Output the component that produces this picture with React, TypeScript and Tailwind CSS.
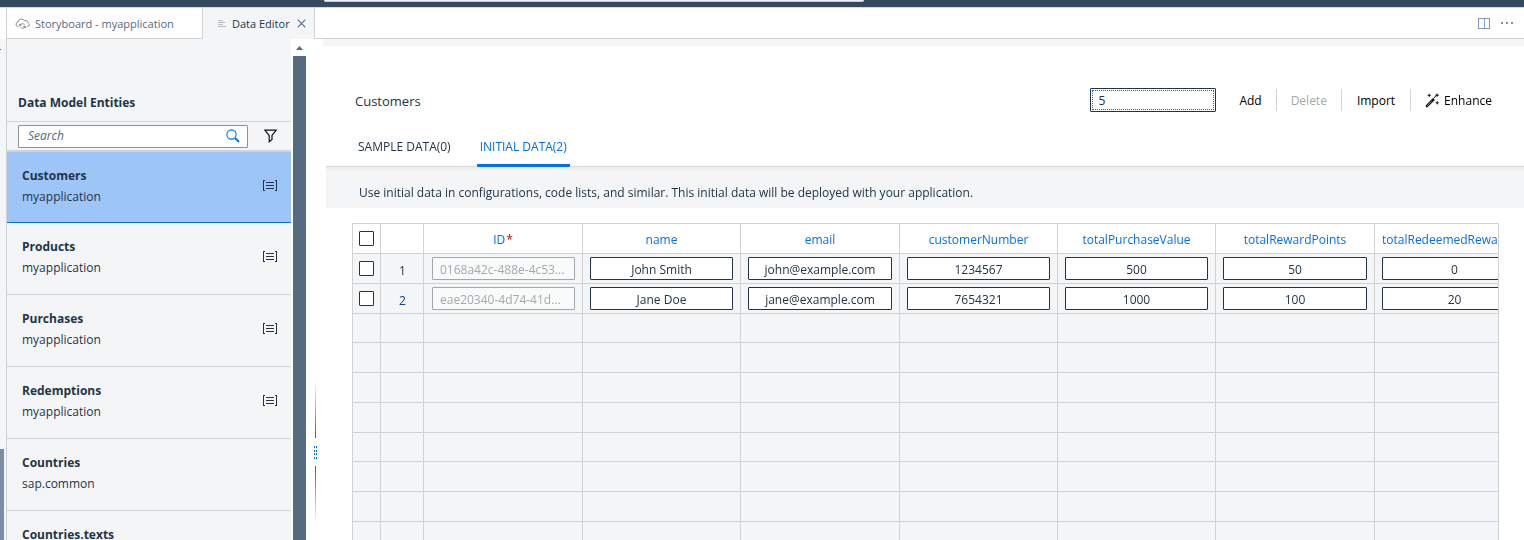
import type { ReactNode } from "react";

type Entity = { name: string; namespace: string; tagged: boolean };

const entities: Entity[] = [
  { name: "Customers", namespace: "myapplication", tagged: true },
  { name: "Products", namespace: "myapplication", tagged: true },
  { name: "Purchases", namespace: "myapplication", tagged: true },
  { name: "Redemptions", namespace: "myapplication", tagged: true },
  { name: "Countries", namespace: "sap.common", tagged: false },
  { name: "Countries.texts", namespace: "sap.common", tagged: false },
];

const columns = [
  "name",
  "email",
  "customerNumber",
  "totalPurchaseValue",
  "totalRewardPoints",
  "totalRedeemedRewardPoints",
];

const rows = [
  { id: "0168a42c-488e-4c53...", values: ["John Smith", "john@example.com", "1234567", "500", "50", "0"] },
  { id: "eae20340-4d74-41d...", values: ["Jane Doe", "jane@example.com", "7654321", "1000", "100", "20"] },
];

const emptyRows = [0, 1, 2, 3, 4, 5, 6, 7];

function CloudIcon() {
  return (
    <svg width="15" height="12" viewBox="0 0 15 12" fill="none" stroke="#8c8f94" strokeWidth="1">
      <path d="M3.500 8.500H3A2.300 2.300 0 0 1 2.800 4 3.700 3.700 0 0 1 9.500 2.700 2.900 2.900 0 0 1 13.400 5.300 1.700 1.700 0 0 1 12.800 8.500H12" />
      <path d="M5 7.200a2.800 2.800 0 0 1 4.800-.2M10.300 8.500a2.800 2.800 0 0 1-4.800.8" />
      <path d="M4.500 5.800v1.700h1.700M8.200 8.500h2.300v1.800" />
    </svg>
  );
}

function LinesIcon() {
  return (
    <svg width="9" height="10" viewBox="0 0 9 10" fill="#b9bbbe">
      <path d="M1 1h5v1H1zM1 3h7v1H1zM1 5h5v1H1zM1 7h8v1H1z" />
    </svg>
  );
}

function EntityIcon() {
  return (
    <svg width="16" height="12" viewBox="0 0 16 12" fill="none" stroke="#223548" strokeWidth="1" shapeRendering="crispEdges">
      <path d="M3 .5H1.500v10H3M13 .5h1.500v10H13M4 2.500h8M4 5.500h8M4 8.500h8" />
    </svg>
  );
}

function SearchIcon() {
  return (
    <svg width="14" height="14" viewBox="0 0 14 14" fill="none" stroke="#0070f2">
      <circle cx="5.500" cy="5.500" r="4.600" strokeWidth="1.100" />
      <path d="M9 9l4 4" strokeWidth="2" />
    </svg>
  );
}

function FilterIcon() {
  return (
    <svg width="13" height="14" viewBox="0 0 13 14" fill="none" stroke="#111" strokeWidth="1.200">
      <path d="M.8 1.100h11.400L8 6.500v4L5.200 12.800V6.500z" />
    </svg>
  );
}

function WandIcon() {
  return (
    <svg width="15" height="15" viewBox="0 0 15 15" fill="#111">
      <path d="M.8 12.200L8 5l1.900 1.900-7.200 7.200q-.9.700-1.600 0t-.3-1.900z" />
      <path d="M2 12.900l4.700-4.700" stroke="#aaa" strokeWidth=".8" />
      <path d="M12 0l.7 1.600 1.700.6-1.700.6L12 4.400l-.7-1.600-1.700-.6 1.700-.6zM4.200.2l.6 1.500 1.500.6-1.500.6-.6 1.500-.6-1.500-1.500-.6 1.500-.6zM12.200 7.700l.6 1.500 1.500.6-1.500.6-.6 1.500-.6-1.500-1.500-.6 1.500-.6z" />
      <path d="M8.500 5.500L10.800 3" stroke="#111" strokeWidth="1" />
    </svg>
  );
}

function Checkbox({ label }: { label: string }) {
  return (
    <input
      type="checkbox"
      aria-label={label}
      className="mx-auto block size-[15px] appearance-none rounded-[1px] border border-[#223548] bg-white checked:bg-[#0070f2]"
    />
  );
}

function Cell({ children, className = "" }: { children?: ReactNode; className?: string }) {
  return <td className={`border-r border-b border-[#d0d2d3] p-0 ${className}`}>{children}</td>;
}

function Sidebar() {
  return (
    <aside className="flex w-[299px] shrink-0">
      <div className="min-w-0 flex-1 overflow-hidden bg-[#f4f5f7]">
        <h2 className="flex h-[82px] items-end px-[11px] pb-[7px] leading-[22px] font-bold">Data Model Entities</h2>
        <div className="flex h-[30px] items-center border-y border-[#d0d2d3] pr-[14px] pl-[11px]">
          <label className="flex h-[23px] flex-1 items-center rounded-[1px] border border-[#89919a] bg-white pr-[7px] pl-[9px]">
            <input
              type="search"
              aria-label="Search entities"
              placeholder="Search"
              className="min-w-0 flex-1 outline-none placeholder:text-[#556b81] placeholder:italic"
            />
            <SearchIcon />
          </label>
          <button type="button" aria-label="Filter" className="ml-4">
            <FilterIcon />
          </button>
        </div>
        <ul>
          {entities.map((entity, index) => (
            <li key={entity.name}>
              <button
                type="button"
                className={
                  index === 0
                    ? "flex h-[72px] w-full items-center justify-between border-t border-b border-t-[#d0d2d3] border-b-[#0070f2] bg-[#9dc5f8] pr-[13px] pb-[3px] pl-[15px] text-left"
                    : "flex h-[72px] w-full items-center justify-between border-b border-[#d0d2d3] pr-[13px] pb-[3px] pl-[15px] text-left"
                }
              >
                <span className="flex flex-col leading-[21px]">
                  <span className="font-bold">{entity.name}</span>
                  <span>{entity.namespace}</span>
                </span>
                {entity.tagged && <EntityIcon />}
              </button>
            </li>
          ))}
        </ul>
      </div>
      <div className="flex w-[15px] flex-col pl-[2px]">
        <div className="flex h-[17px] items-center justify-center">
          <svg width="7" height="4" viewBox="0 0 7 4" fill="#556b82">
            <path d="M3.500 0L7 4H0z" />
          </svg>
        </div>
        <div className="flex-1 bg-[#556b82]" />
      </div>
    </aside>
  );
}

function Splitter() {
  return (
    <div className="flex w-[17px] shrink-0 flex-col items-center pt-[341px] pl-[2px]">
      <div className="h-[58px] w-px bg-linear-to-t from-[#30659c] to-transparent" />
      <svg width="5" height="28" viewBox="0 0 5 28" fill="#0070f2">
        <path d="M1 8h1v2H1zM3 8h1v2H3zM1 12h1v2H1zM3 12h1v2H3zM1 15h1v2H1zM3 15h1v2H3zM1 19h1v2H1zM3 19h1v2H3z" />
      </svg>
      <div className="h-[58px] w-px bg-linear-to-b from-[#30659c] to-transparent" />
    </div>
  );
}

function DataTable() {
  return (
    <div className="mt-[15px] mr-[25px] ml-[29px] min-h-0 flex-1 overflow-hidden border-x border-t border-[#d0d2d3] bg-[#f4f5f7]">
      <table className="w-[1182px] table-fixed border-separate border-spacing-0 text-center">
        <colgroup>
          <col className="w-[28px]" />
          <col className="w-[43px]" />
          <col className="w-[159px]" />
          <col className="w-[158px]" />
          <col className="w-[159px]" />
          <col className="w-[158px]" />
          <col className="w-[158px]" />
          <col className="w-[159px]" />
          <col className="w-[160px]" />
        </colgroup>
        <thead>
          <tr className="h-[30px] bg-white text-[#0070f2]">
            <th className="border-r border-b border-[#d0d2d3] p-0">
              <Checkbox label="Select all rows" />
            </th>
            <th aria-label="Row number" className="border-r border-b border-[#d0d2d3] p-0" />
            <th className="border-r border-b border-[#d0d2d3] p-0 pt-[2px] font-normal">
              ID<span className="pl-px text-[#d20a0a]">*</span>
            </th>
            {columns.map((column) => (
              <th key={column} className="overflow-hidden border-r border-b border-[#d0d2d3] px-[7px] pt-[2px] pb-0 font-normal whitespace-nowrap">
                {column}
              </th>
            ))}
          </tr>
        </thead>
        <tbody>
          {rows.map((row, index) => (
            <tr key={row.id} className="h-[30px]">
              <Cell>
                <Checkbox label={`Select row ${index + 1}`} />
              </Cell>
              <Cell className={index === 1 ? "pt-[5px]! pl-px! text-[#0a3f8f]" : "pt-[5px]! pl-px!"}>{index + 1}</Cell>
              <Cell className="px-[7px]! pl-2!">
                <input
                  disabled
                  aria-label={`ID, row ${index + 1}`}
                  defaultValue={row.id}
                  className="block h-[23px] w-full rounded-[1px] border border-[#a0a7b0] bg-[#f9fafa] px-[7px] pt-px text-[#a3a9b0]"
                />
              </Cell>
              {row.values.map((value, column) => (
                <Cell key={columns[column]} className="px-[7px]!">
                  <input
                    aria-label={`${columns[column]}, row ${index + 1}`}
                    defaultValue={value}
                    className="block h-[23px] w-full rounded-[1px] border border-[#223548] bg-white px-[7px] pt-px text-center outline-none"
                  />
                </Cell>
              ))}
            </tr>
          ))}
          {emptyRows.map((row) => (
            <tr key={row} className={row % 4 === 0 ? "h-[29px]" : "h-[30px]"}>
              <Cell />
              <Cell />
              <Cell />
              {columns.map((column) => (
                <Cell key={column} />
              ))}
            </tr>
          ))}
        </tbody>
      </table>
    </div>
  );
}

function Editor() {
  return (
    <main className="flex min-w-0 flex-1 flex-col">
      <div className="h-[7px] shrink-0 bg-[#f4f5f7]" />
      <div className="flex h-[84px] shrink-0 items-end justify-between pr-[32px] pb-[18px] pl-8">
        <h1 className="text-[13px] leading-[22px]">Customers</h1>
        <div className="flex h-6 items-center text-black">
          <div className="flex h-6 w-[126px] rounded-[1px] border border-[#223548] bg-white p-px">
            <input
              aria-label="Number of rows to add"
              defaultValue="5"
              className="min-w-0 flex-1 border border-dotted border-[#0070f2] px-[5px] pt-px text-[#223548] outline-none"
              autoFocus
              onFocus={(event) => event.currentTarget.setSelectionRange(1, 1)}
            />
          </div>
          <button type="button" className="ml-2 h-[22px] border-r border-[#d0d2d3] pt-px pr-[14px] pl-[15px]">Add</button>
          <button type="button" disabled className="h-[22px] border-r border-[#d0d2d3] px-[14px] pt-px text-[#a3a9b0]">Delete</button>
          <button type="button" className="h-[22px] border-r border-[#d0d2d3] px-[15px] pt-px">Import</button>
          <button type="button" className="flex h-[22px] items-center gap-1 pt-px pl-[14px]">
            <WandIcon />
            Enhance
          </button>
        </div>
      </div>
      <div role="tablist" className="ml-[3px] flex h-[37px] shrink-0 gap-[23px] border-b border-[#d9dadb] pl-[29px]">
        <button type="button" role="tab" aria-selected="false" className="h-[37px] border-b-3 border-transparent px-[3px]">
          SAMPLE DATA(0)
        </button>
        <button type="button" role="tab" aria-selected="true" className="h-[37px] rounded-[1px] border-b-3 border-[#0070f2] px-[3px] text-[#0070f2]">
          INITIAL DATA(2)
        </button>
      </div>
      <p className="ml-[3px] h-[41px] shrink-0 bg-[#f4f5f7] bg-linear-to-b from-[#eaebec] from-0% to-[#f4f5f7] to-10% pt-[15px] pl-[33px] leading-[22px]">
        Use initial data in configurations, code lists, and similar. This initial data will be deployed with your application.
      </p>
      <DataTable />
    </main>
  );
}

export default function App() {
  return (
    <div className="flex h-screen flex-col overflow-hidden bg-white font-['Open_Sans','Noto_Sans',sans-serif] text-[12px] text-[#223548]">
      <header className="flex h-2 shrink-0 justify-center border-b border-[#d9dadb] bg-[#354a5f] pr-[337px]">
        <div className="h-[2px] w-[540px] rounded-b-sm border-b border-[#c5cacf] bg-[#eff1f2]" />
      </header>
      <div className="flex min-h-0 flex-1">
        <div className="flex w-[7px] shrink-0 flex-col border-r border-[#d0d2d3] bg-[#f4f5f7]">
          <div className="h-[31px] shrink-0 bg-white" />
          <div className="mt-[10px] h-px w-px bg-[#556b82]" />
          <div className="mt-[399px] w-1 flex-1 bg-[#788fa6]" />
        </div>
        <div className="flex min-w-0 flex-1 flex-col">
          <nav aria-label="Open editors" className="flex h-[31px] shrink-0 text-[11px] text-[#556b82]">
            <button type="button" className="flex w-[196px] items-center gap-[5px] border-r border-b border-[#d0d2d3] pt-[2px] pl-2">
              <CloudIcon />
              Storyboard - myapplication
            </button>
            <div className="flex w-[112px] items-center border-r border-[#d0d2d3] bg-[#f4f5f7] pl-[14px]">
              <button type="button" className="flex items-center gap-[6px] pt-px text-[#223548]">
                <LinesIcon />
                Data Editor
              </button>
              <button type="button" aria-label="Close Data Editor" className="ml-auto pr-2">
                <svg width="9" height="9" viewBox="0 0 9 9" stroke="#556b82" strokeWidth="1.100">
                  <path d="M.7.7l7.600 7.600M8.300.7L.7 8.300" />
                </svg>
              </button>
            </div>
            <div className="flex flex-1 items-center justify-end gap-[11px] border-b border-[#d0d2d3] pr-[11px]">
              <button type="button" aria-label="Split editor">
                <svg width="12" height="11" viewBox="0 0 12 11" fill="none" stroke="#8797a8" shapeRendering="crispEdges">
                  <path d="M.5.500h11v10H.5z" />
                  <path d="M6.500 1v9" stroke="#74aee8" />
                </svg>
              </button>
              <button type="button" aria-label="More actions">
                <svg width="12" height="3" viewBox="0 0 12 3" fill="#7e8fa1">
                  <path d="M0 0h2v2H0zM5 0h2v2H5zM10 0h2v2h-2z" />
                </svg>
              </button>
            </div>
          </nav>
          <div className="flex min-h-0 flex-1">
            <Sidebar />
            <Splitter />
            <Editor />
          </div>
        </div>
      </div>
    </div>
  );
}
